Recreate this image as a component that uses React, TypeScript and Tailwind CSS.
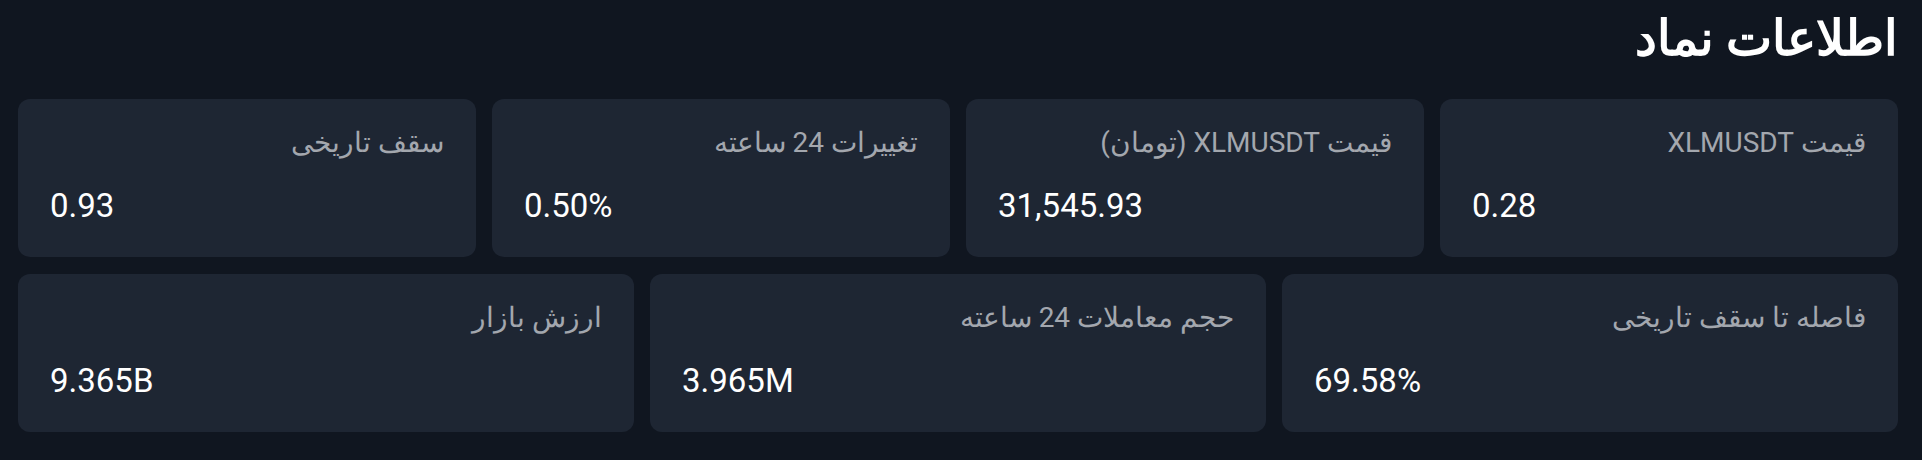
import React from "react";

type Item = { label: string; value: string };

const row1: Item[] = [
  { label: "قیمت XLMUSDT", value: "0.28" },
  { label: "قیمت XLMUSDT (تومان)", value: "31,545.93" },
  { label: "تغییرات 24 ساعته", value: "0.50%" },
  { label: "سقف تاریخی", value: "0.93" },
];

const row2: Item[] = [
  { label: "فاصله تا سقف تاریخی", value: "69.58%" },
  { label: "حجم معاملات 24 ساعته", value: "3.965M" },
  { label: "ارزش بازار", value: "9.365B" },
];

function Card({ item }: { item: Item }) {
  return (
    <div className="flex h-[158px] flex-col rounded-xl bg-[#1e2633] px-[32px] pt-[24px]">
      <div className="text-[28px] leading-[40px] text-[#a3a7ae]">{item.label}</div>
      <div dir="ltr" className="mt-[23px] text-left text-[33px] leading-[40px] font-normal text-white">
        {item.value}
      </div>
    </div>
  );
}

export default function App() {
  return (
    <div
      dir="rtl"
      className="min-h-[460px] bg-[#101620] pl-[18px] pr-[24px] pt-[7px]"
      style={{ fontFamily: 'Roboto, "Noto Sans", sans-serif' }}
    >
      <h1 className="text-[49px] font-black leading-[64px] text-white">اطلاعات نماد</h1>
      <div className="mt-[28px] flex flex-col gap-[17px]">
        <div className="grid grid-cols-4 gap-4">
          {row1.map((it) => (
            <Card key={it.label} item={it} />
          ))}
        </div>
        <div className="grid grid-cols-3 gap-4">
          {row2.map((it) => (
            <Card key={it.label} item={it} />
          ))}
        </div>
      </div>
    </div>
  );
}
